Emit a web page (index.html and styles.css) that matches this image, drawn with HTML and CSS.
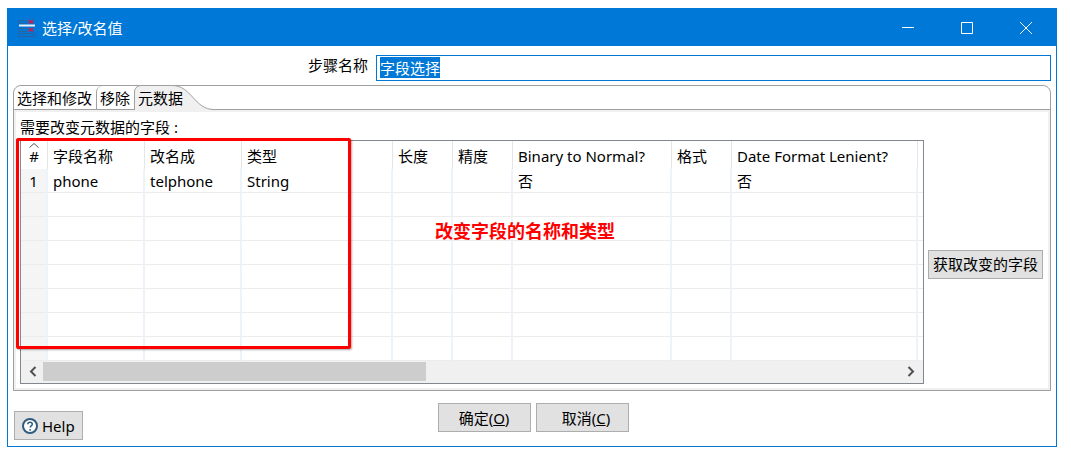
FILE: index.html
```html
<!DOCTYPE html>
<html lang="zh-CN">
<head>
<meta charset="utf-8">
<title>选择/改名值</title>
<link rel="stylesheet" href="styles.css">
</head>
<body>
<main class="window">
  <header class="titlebar">
    <svg class="app-icon" width="18" height="18" viewBox="0 0 18 18" aria-hidden="true">
      <path d="M.5 1.500h8v3h-8zM.5 9.500h8v3h-8zM.5 14.500h16v3h-16z" stroke="#2b62a0" fill="none"/>
      <path d="M1 6.500h16" stroke="#e8f1fa" stroke-width="2"/>
      <path d="M11 1l4 3.500M15 1l-4 3.500M11 9l4 3.500M15 9l-4 3.500" stroke="#e0143c" stroke-width="1.500"/>
    </svg>
    <h1 class="title">选择/改名值</h1>
    <div class="window-controls">
      <button type="button" aria-label="最小化"><svg width="12" height="12" viewBox="0 0 12 12"><path d="M0 5.500h12"/></svg></button>
      <button type="button" aria-label="最大化"><svg width="12" height="12" viewBox="0 0 12 12"><path d="M.5 .5h11v11h-11z"/></svg></button>
      <button type="button" aria-label="关闭"><svg width="12" height="12" viewBox="0 0 12 12"><path d="M0 0l12 12M12 0L0 12"/></svg></button>
    </div>
  </header>

  <div class="name-row">
    <label for="step-name">步骤名称</label>
    <input id="step-name" class="step-name" type="text" value="字段选择" autofocus>
  </div>

  <section class="folder">
    <div class="tabs" role="tablist">
      <button type="button" class="tab" role="tab">选择和修改</button>
      <button type="button" class="tab" role="tab">移除</button>
      <button type="button" class="tab tab-active" role="tab" aria-selected="true">
        <svg class="tab-shape" width="80" height="25" viewBox="0 0 80 25" aria-hidden="true">
          <path class="tab-fill" d="M.5 25V6Q2 .5 7 .5H38C58 .5 60 24.500 80 24.500V25z"/>
          <path class="tab-line" d="M.5 25V6Q2 .5 7 .5H38C58 .5 60 24.500 80 24.500"/>
        </svg>
        <span class="tab-text">元数据</span>
      </button>
    </div>
    <div class="panel">
      <div class="caption">需要改变元数据的字段 :</div>
      <div class="content">
        <div class="grid-box">
          <table class="fields">
            <colgroup>
              <col class="c-num"><col class="c-name"><col class="c-name"><col class="c-type"><col class="c-short"><col class="c-short"><col class="c-binary"><col class="c-short"><col class="c-date"><col>
            </colgroup>
            <thead>
              <tr><th class="num"><svg class="sort" width="10" height="5" viewBox="0 0 10 5" aria-hidden="true"><path d="M.5 4.500L5 .5l4.500 4"/></svg>#</th><th>字段名称</th><th>改名成</th><th>类型</th><th>长度</th><th>精度</th><th>Binary to Normal?</th><th>格式</th><th>Date Format Lenient?</th><th></th></tr>
            </thead>
            <tbody>
              <tr><td class="num">1</td><td>phone</td><td>telphone</td><td>String</td><td></td><td></td><td>否</td><td></td><td>否</td><td></td></tr>
              <tr><td class="num"></td><td></td><td></td><td></td><td></td><td></td><td></td><td></td><td></td><td></td></tr>
              <tr><td class="num"></td><td></td><td></td><td></td><td></td><td></td><td></td><td></td><td></td><td></td></tr>
              <tr><td class="num"></td><td></td><td></td><td></td><td></td><td></td><td></td><td></td><td></td><td></td></tr>
              <tr><td class="num"></td><td></td><td></td><td></td><td></td><td></td><td></td><td></td><td></td><td></td></tr>
              <tr><td class="num"></td><td></td><td></td><td></td><td></td><td></td><td></td><td></td><td></td><td></td></tr>
              <tr><td class="num"></td><td></td><td></td><td></td><td></td><td></td><td></td><td></td><td></td><td></td></tr>
              <tr><td class="num"></td><td></td><td></td><td></td><td></td><td></td><td></td><td></td><td></td><td></td></tr>
            </tbody>
          </table>
          <div class="scrollbar">
            <button type="button" class="arrow" aria-label="向左滚动"><svg width="8" height="11" viewBox="0 0 8 11"><path d="M6.500 1L2 5.500 6.500 10"/></svg></button>
            <div class="track"><div class="thumb"></div></div>
            <button type="button" class="arrow" aria-label="向右滚动"><svg width="8" height="11" viewBox="0 0 8 11"><path d="M1.500 1L6 5.500 1.500 10"/></svg></button>
          </div>
          <div class="highlight"></div>
          <div class="note">改变字段的名称和类型</div>
        </div>
        <button type="button" class="btn get-fields">获取改变的字段</button>
      </div>
    </div>
  </section>

  <footer class="footer">
    <button type="button" class="btn help">
      <svg width="16" height="16" viewBox="0 0 16 16" aria-hidden="true"><circle cx="8" cy="8" r="7"/><path d="M5.800 6.300C5.800 3.500 10.300 3.600 10.300 6.200 10.300 7.800 8.100 7.800 8.100 9.600M8.100 11v1.700"/></svg>
      Help
    </button>
    <div class="actions">
      <button type="button" class="btn action">确定(<u>O</u>)</button>
      <button type="button" class="btn action">&nbsp; 取消(<u>C</u>)</button>
    </div>
  </footer>
</main>
<script src="main.js"></script>
</body>
</html>
```
FILE: styles.css
```css
* { box-sizing: border-box; }

body {
  margin: 0;
  padding: 8px 14px 7px 7px;
  background: #fff;
  color: #000;
  font: 15px/20px "Noto Sans", "Noto Sans CJK SC", sans-serif;
}

button, input { font: inherit; color: inherit; }

.window { border: 1px solid #0078d7; background: #fff; }

.titlebar {
  display: flex;
  align-items: center;
  height: 37px;
  padding-left: 10px;
  background: #0078d7;
  color: #fff;
}
.title { margin: 0 0 0 6px; font-size: 15px; font-weight: 400; }
.window-controls { display: flex; margin-left: auto; padding-right: 1px; }
.window-controls button {
  display: grid;
  place-items: center;
  width: 59px;
  height: 36px;
  padding: 0;
  border: 0;
  background: none;
}
.window-controls svg { fill: none; stroke: #fff; }

.name-row {
  display: grid;
  grid-template-columns: 355fr 675fr;
  column-gap: 8px;
  padding: 9px 5px 4px;
}
.name-row label { text-align: right; }
.step-name {
  width: 100%;
  height: 26px;
  padding: 0 3px 2px;
  border: 1px solid #0078d7;
  border-radius: 0;
  outline: 0;
  background: #fff;
}
.step-name::selection { background: #0078d7; color: #fff; }

.folder {
  margin: 0 5px;
  border: 1px solid #a0a0a0;
  border-radius: 8px 8px 0 0;
}
.tabs { display: flex; height: 24px; border-bottom: 1px solid #a0a0a0; }
.tab {
  padding: 0 4px 0 3px;
  border: 0;
  border-radius: 0;
  background: none;
  white-space: nowrap;
}
.tab + .tab { border-left: 1px solid #a0a0a0; border-radius: 6px 0 0; }
.tab + .tab-active { position: relative; border: 0; padding-left: 4px; }
.tab-shape { position: absolute; left: 0; top: -1px; }
.tab-fill { fill: #f0f0f0; }
.tab-line { fill: none; stroke: #a0a0a0; }
.tab-text { position: relative; }

.panel { padding: 5px 5px 4px 4px; border: 2px solid #f0f0f0; }
.caption { padding-bottom: 3px; }
.content { display: flex; gap: 4px; }
.grid-box { position: relative; flex: 1; min-width: 0; border: 1px solid #828790; }

.fields { width: 100%; table-layout: fixed; border-collapse: separate; border-spacing: 0; }
.fields th, .fields td {
  height: 24px;
  padding: 0 0 0 5px;
  border-right: 2px solid #edf3fa;
  border-bottom: 1px solid #ececec;
  font-weight: 400;
  line-height: 20px;
  text-align: left;
  white-space: nowrap;
}
.fields th { height: 28px; padding-top: 2px; border-right: 1px solid #e5e5e5; border-bottom: 0; }
.fields th:last-child, .fields td:last-child { border-right: 0; padding: 0; }
.fields .num { padding-left: 0; text-align: center; }
.fields td.num { background: #f5f5f5; }
.c-num { width: 27px; }
.c-name { width: 97px; }
.c-type { width: 151px; }
.c-short { width: 60px; }
.c-binary { width: 159px; }
.c-date { width: 186px; }
.sort { position: absolute; left: 8px; top: 2px; fill: none; stroke: #555; }

.scrollbar { display: flex; height: 22px; padding: 1px 1px 2px; background: #f0f0f0; }
.arrow {
  display: grid;
  place-items: center;
  width: 21px;
  padding: 0;
  border: 0;
  background: none;
}
.arrow svg { fill: none; stroke: #505050; stroke-width: 2; }
.track { flex: 1; }
.thumb { width: 383px; height: 100%; background: #cdcdcd; }

.highlight {
  position: absolute;
  left: -5px;
  top: -3px;
  width: 335px;
  height: 211px;
  border: 3px solid #f00;
  border-radius: 2px;
  box-shadow: 1px 1px 2px #0005;
}
.note {
  position: absolute;
  left: 414px;
  top: 80px;
  color: #f00;
  font-size: 18px;
  font-weight: 700;
  white-space: nowrap;
}

.btn {
  display: inline-flex;
  align-items: center;
  justify-content: center;
  height: 29px;
  padding: 0 4px;
  border: 1px solid #adadad;
  border-radius: 0;
  background: #e1e1e1;
  white-space: nowrap;
}
.get-fields { align-self: center; margin-top: 4px; }

.footer {
  display: grid;
  grid-template-columns: 1fr auto 1fr;
  align-items: start;
  padding: 12px 4px 6px 6px;
}
.help { justify-self: start; gap: 4px; margin-top: 8px; padding: 0 7px; }
.help svg { fill: #fff; stroke: #315b7d; stroke-width: 2; }
.help path { fill: none; stroke-width: 1.5px; }
.actions { display: flex; gap: 5px; }
.action { width: 93px; }
```
FILE: main.js
```js
const stepName = document.getElementById("step-name");
stepName.focus();
stepName.select();
```
